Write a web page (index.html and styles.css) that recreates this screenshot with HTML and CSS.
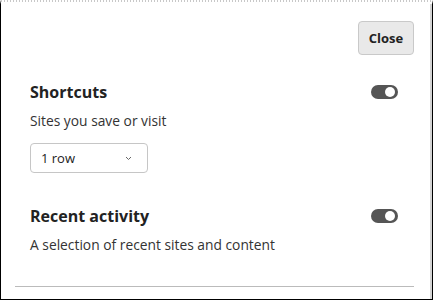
FILE: index.html
```html
<!DOCTYPE html>
<html lang="en-us">
<head>
  <meta charset="utf-8">
  <title>Customize</title>
  <link rel="stylesheet" href="styles.css">
</head>
<body>
  <div id="panel">
    <div id="panel-inner">
      <div id="close-row" class="flex-end">
        <button id="close">Close</button>
      </div>

      <div class="section">
        <div class="section-head">
          <h2>Shortcuts</h2>
          <span class="toggle"></span>
        </div>
        <p class="desc">Sites you save or visit</p>
        <div class="select">
          <span>1 row</span>
          <svg width="7" height="5" viewBox="0 0 7 5"><path d="M1 1 L3.5 3.5 L6 1" fill="none" stroke="#666" stroke-width="1"/></svg>
        </div>
      </div>

      <div class="section">
        <div class="section-head">
          <h2>Recent activity</h2>
          <span class="toggle"></span>
        </div>
        <p class="desc">A selection of recent sites and content</p>
      </div>

      <div id="divider"></div>
    </div>
    <div id="edge"></div>
  </div>
</body>
</html>
```

FILE: styles.css
```css
* {
  box-sizing: border-box;
}
html, body {
  margin: 0;
  background: #fff;
}
body {
  font-family: "Open Sans", "Noto Sans", sans-serif;
  color: #2b2b2b;
}
h2, p {
  margin: 0;
}
.flex-end {
  display: flex;
  justify-content: flex-end;
}
#panel {
  width: 433px;
  height: 300px;
  display: flex;
  border-left: 1px solid #000;
  border-bottom: 1px solid #000;
  border-right: 1px solid #000;
  border-top: 4px solid transparent;
  background-image: radial-gradient(circle, #c8c8c8 0.7px, transparent 0.9px);
  background-size: 3px 2px;
  background-repeat: repeat-x;
  background-position: 0 0;
  background-origin: border-box;
}
#panel-inner {
  flex: 1;
  display: flex;
  flex-direction: column;
  padding: 17px 16px 0 29px;
  background: #fff;
}
#edge {
  width: 2px;
  background: #d4d4d4;
}
#close {
  font-family: inherit;
  font-size: 13px;
  font-weight: bold;
  color: #222;
  width: 56px;
  height: 34px;
  padding: 0;
  background: #e9e9e9;
  border: 1px solid #c9c9c9;
  border-radius: 4px;
}
.section {
  display: flex;
  flex-direction: column;
}
.section + .section {
  margin-top: 32px;
}
#close-row {
  margin-bottom: 26px;
}
.section-head {
  display: flex;
  justify-content: space-between;
  align-items: center;
  padding-right: 16px;
}
h2 {
  font-size: 16px;
  font-weight: bold;
  color: #222;
  line-height: 22px;
}
.toggle {
  position: relative;
  width: 27px;
  height: 14px;
  border-radius: 7px;
  background: #555;
}
.toggle::after {
  content: "";
  position: absolute;
  right: 3px;
  top: 2px;
  width: 10px;
  height: 10px;
  border-radius: 50%;
  background: #fff;
}
.desc {
  font-size: 13.8px;
  line-height: 20px;
  margin-top: 8px;
  color: #333;
}
.select {
  display: flex;
  justify-content: space-between;
  align-items: center;
  width: 118px;
  height: 30px;
  margin-top: 12px;
  padding: 0 15px 0 10px;
  border: 1px solid #c6c6c6;
  border-radius: 4px;
  font-size: 13px;
  color: #222;
}
#divider {
  margin-top: auto;
  margin-bottom: 12px;
  margin-left: -15px;
  height: 1px;
  background: #bbb;
}
```
